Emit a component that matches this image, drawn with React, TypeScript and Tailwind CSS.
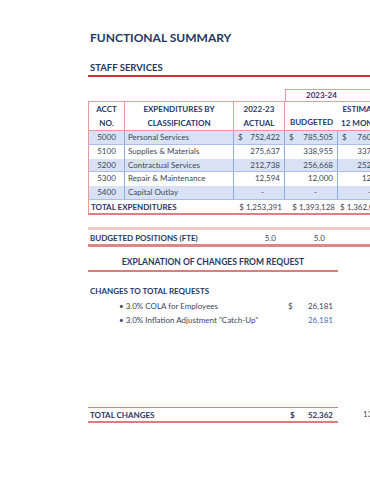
import React from 'react';

interface Row {
  acct: string;
  name: string;
  actual: string;
  budgeted: string;
  estimated: string;
  dollar?: boolean;
  dash?: boolean;
}

const rows: Row[] = [
  { acct: '5000', name: 'Personal Services', actual: '752,422', budgeted: '785,505', estimated: '760,118', dollar: true },
  { acct: '5100', name: 'Supplies & Materials', actual: '275,637', budgeted: '338,955', estimated: '337,412' },
  { acct: '5200', name: 'Contractual Services', actual: '212,738', budgeted: '256,668', estimated: '252,004' },
  { acct: '5300', name: 'Repair & Maintenance', actual: '12,594', budgeted: '12,000', estimated: '12,500' },
  { acct: '5400', name: 'Capital Outlay', actual: '-', budgeted: '-', estimated: '-', dash: true },
];

const Money = ({ value, dollar, dash }: { value: string; dollar?: boolean; dash?: boolean }) => (
  <div className="flex justify-between px-[4px]">
    <span>{dollar ? '$' : ''}</span>
    <span className={dash ? 'pr-[16px]' : ''}>{value}</span>
  </div>
);

export default function App() {
  return (
    <div
      className="w-[370px] h-[480px] overflow-hidden bg-white text-[#3b4656]"
      style={{ fontFamily: 'Lato, "Liberation Sans", sans-serif' }}
    >
      <div className="pl-[88px] w-[480px]">
        {/* page title */}
        <div className="pt-[29px] h-[58px] pl-[2px] text-[12px] font-bold text-[#1f3864] leading-[18px]">
          FUNCTIONAL SUMMARY
        </div>
        <div className="h-[19px] pl-[2px] text-[9.5px] font-bold text-[#1f3864] leading-[19px] border-b-2 border-[#d0323a]">
          STAFF SERVICES
        </div>

        {/* expenditure table */}
        <div className="pt-[12px] text-[8px] leading-[14px]">
          <div className="flex h-[12px]">
            <div className="w-[197px]" />
            <div className="flex-1 border-t border-l border-[#e89a9a] font-bold text-[#1f3864] leading-[11px] pl-[20px]">
              2023-24
            </div>
          </div>
          <div className="flex h-[30px] font-bold text-[#1f3864] border-t border-b border-[#e89a9a]">
            <div className="w-[37px] border-l border-r border-[#e89a9a] flex flex-col items-center justify-center leading-[14px]">
              <span>ACCT</span>
              <span>NO.</span>
            </div>
            <div className="w-[109px] border-r border-[#e89a9a] flex flex-col items-center justify-center leading-[14px]">
              <span>EXPENDITURES BY</span>
              <span>CLASSIFICATION</span>
            </div>
            <div className="w-[51px] border-r border-[#e89a9a] flex flex-col items-center justify-center leading-[14px]">
              <span>2022-23</span>
              <span>ACTUAL</span>
            </div>
            <div className="w-[53px] flex flex-col items-center justify-end pb-[1px] leading-[14px]">
              <span>BUDGETED</span>
            </div>
            <div className="w-[53px] flex flex-col items-center justify-center leading-[14px]">
              <span>ESTIMATED</span>
              <span>12 MONTHS</span>
            </div>
          </div>

          {rows.map((r, i) => (
            <div
              key={r.acct}
              className={`flex h-[13.8px] leading-[13.8px] border-l border-[#e89a9a] ${i % 2 === 0 ? 'bg-[#d9e2f5] border-b border-b-[#a9bde6]' : 'bg-white'}`}
            >
              <div className="w-[36px] text-center border-r border-[#8faadc]">{r.acct}</div>
              <div className="w-[109px] pl-[3px] border-r border-[#8faadc]">{r.name}</div>
              <div className="w-[51px] border-r border-[#8faadc]">
                <Money value={r.actual} dollar={r.dollar} dash={r.dash} />
              </div>
              <div className="w-[53px] border-r border-[#8faadc]">
                <Money value={r.budgeted} dollar={r.dollar} dash={r.dash} />
              </div>
              <div className="w-[53px]">
                <Money value={r.estimated} dollar={r.dollar} dash={r.dash} />
              </div>
            </div>
          ))}

          <div className="flex h-[15px] leading-[14px] border-l border-[#e89a9a] border-b-2 border-b-[#df7f7f]">
            <div className="w-[145px] pl-[2px] font-bold text-[#1f3864]">TOTAL EXPENDITURES</div>
            <div className="w-[51px] pr-[3px] text-right">$ 1,253,391</div>
            <div className="w-[53px] pr-[3px] text-right">$ 1,393,128</div>
            <div className="w-[53px] pl-[2px]">$ 1,362,034</div>
          </div>

          {/* positions */}
          <div className="mt-[12px] border-t-[3px] border-[#f2c9c9] border-b-[3px] border-b-[#e08585] h-[20px] flex leading-[14px] pt-[1px]">
            <div className="w-[146px] pl-[2px] font-bold text-[#1f3864]">BUDGETED POSITIONS (FTE)</div>
            <div className="w-[51px] pr-[9px] text-right">5.0</div>
            <div className="w-[53px] pr-[13px] text-right">5.0</div>
            <div className="w-[53px]" />
          </div>
        </div>

        {/* explanation */}
        <div className="w-[250px] mt-[9px] h-[16px] border-b-2 border-[#e07b7b] text-center text-[8.5px] font-bold text-[#1f3864] leading-[12px]">
          EXPLANATION OF CHANGES FROM REQUEST
        </div>

        <div className="w-[250px] text-[8px] leading-[14px]">
          <div className="mt-[12px] pl-[2px] font-bold text-[#1f3864]">CHANGES TO TOTAL REQUESTS</div>
          <div className="flex mt-[1px]">
            <div className="w-[200px] pl-[31px]">• 3.0% COLA for Employees</div>
            <div className="w-[45px] flex justify-between">
              <span>$</span>
              <span>26,181</span>
            </div>
          </div>
          <div className="flex">
            <div className="w-[200px] pl-[31px]">• 3.0% Inflation Adjustment "Catch-Up"</div>
            <div className="w-[45px] text-right text-[#4a70b8]">26,181</div>
          </div>
        </div>

        {/* total changes */}
        <div className="flex items-center mt-[80px] text-[8px] leading-[13px]">
          <div className="w-[250px] h-[16px] border-t border-b-2 border-[#e07b7b] border-b-[#e07b7b] flex pt-[1px] font-bold text-[#1f3864]">
            <div className="w-[202px] pl-[2px]">TOTAL CHANGES</div>
            <div className="w-[43px] flex justify-between">
              <span>$</span>
              <span>52,362</span>
            </div>
          </div>
          <div className="pl-[25px] text-[#3b4656]">13</div>
        </div>
      </div>
    </div>
  );
}
